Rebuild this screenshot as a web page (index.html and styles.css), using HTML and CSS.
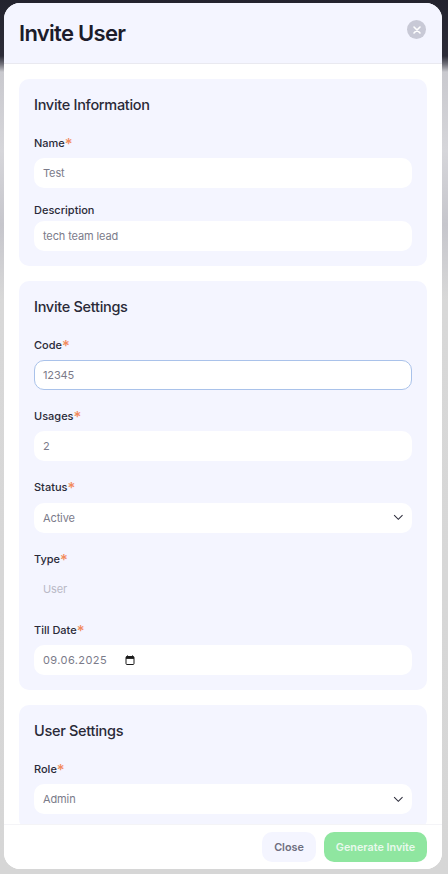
FILE: index.html
```html
<!DOCTYPE html>
<html lang="en">
<head>
<meta charset="utf-8">
<title>Invite User</title>
<link rel="stylesheet" href="styles.css">
</head>
<body>
<div class="modal">
  <header class="modal-head">
    <h1 class="modal-title">Invite User</h1>
    <button class="dismiss" type="button" aria-label="Close">
      <svg viewBox="0 0 10 10" width="10" height="10"><path d="M2 2l6 6M8 2l-6 6" stroke="#fff" stroke-width="1.6" stroke-linecap="round" fill="none"/></svg>
    </button>
  </header>
  <div class="modal-body">
    <section class="card">
      <h2 class="card-title">Invite Information</h2>
      <div class="field">
        <label class="label req">Name<span class="star">*</span></label>
        <div class="control">Test</div>
      </div>
      <div class="field">
        <label class="label">Description</label>
        <div class="control">tech team lead</div>
      </div>
    </section>
    <section class="card">
      <h2 class="card-title">Invite Settings</h2>
      <div class="field">
        <label class="label req">Code<span class="star">*</span></label>
        <div class="control focused">12345</div>
      </div>
      <div class="field">
        <label class="label req">Usages<span class="star">*</span></label>
        <div class="control">2</div>
      </div>
      <div class="field">
        <label class="label req">Status<span class="star">*</span></label>
        <div class="control select">Active
          <svg class="chevron" viewBox="0 0 12 8" width="11" height="7"><path d="M1 1.2l4.8 4.8 4.8-4.8" stroke="#2b2b3a" stroke-width="1.2" fill="none"/></svg>
        </div>
      </div>
      <div class="field">
        <label class="label req">Type<span class="star">*</span></label>
        <div class="control disabled">User</div>
      </div>
      <div class="field">
        <label class="label req">Till Date<span class="star">*</span></label>
        <div class="control date"><span class="date-text">09.06.2025</span>
          <svg viewBox="0 0 10 10" width="10" height="10"><path d="M2.5 .4v1.2M7.5 .4v1.2" stroke="#1a1a1a" stroke-width="1"/><rect x="1" y="1.5" width="8" height="8" rx="1" fill="none" stroke="#1a1a1a" stroke-width="1"/><rect x="1" y="1.5" width="8" height="2.4" fill="#1a1a1a"/></svg>
        </div>
      </div>
    </section>
    <section class="card">
      <h2 class="card-title">User Settings</h2>
      <div class="field">
        <label class="label req">Role<span class="star">*</span></label>
        <div class="control select">Admin
          <svg class="chevron" viewBox="0 0 12 8" width="11" height="7"><path d="M1 1.2l4.8 4.8 4.8-4.8" stroke="#2b2b3a" stroke-width="1.2" fill="none"/></svg>
        </div>
      </div>
    </section>
  </div>
  <footer class="modal-foot">
    <button class="btn btn-close" type="button">Close</button>
    <button class="btn btn-primary" type="button">Generate Invite</button>
  </footer>
</div>
</body>
</html>
```
FILE: styles.css
```css
* { box-sizing: border-box; }
html, body { height: 100%; }
body {
  margin: 0;
  padding: 3px 6px 5px 4px;
  overflow: hidden;
  font-family: Inter, "Liberation Sans", sans-serif;
  background: linear-gradient(180deg, #23232e 0, #2c2c38 56px, #6f6f78 64px, #c9c9ce 72px, #d6d6da 150px, #c6c6cc 225px, #d8d8d8 300px, #d6d6d6 100%);
}
.modal {
  height: 100%;
  display: flex;
  flex-direction: column;
  background: #fff;
  border-radius: 16px;
  overflow: hidden;
}
.modal-head {
  flex: none;
  height: 61px;
  padding: 0 15px;
  display: flex;
  justify-content: space-between;
  background: #f4f5ff;
  border-bottom: 1px solid #e9e9f0;
}
.modal-title {
  margin: 15px 0 0;
  font-size: 22px;
  line-height: 30px;
  font-weight: 600;
  letter-spacing: -.7px;
  color: #1c1c2a;
}
.dismiss {
  margin: 17px 1px 0 0;
  width: 19px;
  height: 19px;
  padding: 0;
  border: 0;
  border-radius: 50%;
  background: #c8c9d6;
  display: flex;
  align-items: center;
  justify-content: center;
}
.modal-body {
  flex: 1;
  min-height: 0;
  overflow: hidden;
  padding: 15px 15px 0;
  display: flex;
  flex-direction: column;
  gap: 15px;
}
.card {
  flex: none;
  padding: 15px;
  background: #f4f5ff;
  border-radius: 10px;
}
.card-title {
  margin: 0;
  font-size: 14.5px;
  line-height: 22.75px;
  font-weight: 500;
  letter-spacing: -.3px;
  color: #2a2a38;
}
.field { margin-top: 14px; }
.label {
  display: block;
  margin-bottom: 3px;
  font-size: 11px;
  line-height: 16px;
  font-weight: 500;
  color: #2a2a38;
}
.label.req { line-height: 25px; height: 24.25px; }
.star {
  font-size: 15px;
  font-weight: 500;
  line-height: 1;
  vertical-align: -2px;
  color: #f28a5c;
}
.control {
  height: 30px;
  padding: 0 9px;
  display: flex;
  align-items: center;
  background: #fff;
  border-radius: 10px;
  font-size: 11px;
  letter-spacing: -.12px;
  color: #7b7b8a;
}
.focused { border: 1px solid #a9c2ea; padding: 0 8px; }
.select { justify-content: space-between; }
.chevron { margin-right: -1px; }
.disabled { background: transparent; color: #b9b9c6; }
.date { gap: 18px; }
.date-text { letter-spacing: .4px; }
.modal-foot {
  flex: none;
  height: 45px;
  padding: 7px 15px 0;
  display: flex;
  justify-content: flex-end;
  gap: 8px;
  background: #fff;
  border-top: 1px solid #f4f4f7;
}
.btn {
  height: 30px;
  border: 0;
  border-radius: 10px;
  font-family: inherit;
  font-size: 10.8px;
  font-weight: 600;
}
.btn-close { width: 54px; padding: 0; background: #f4f5ff; color: #6e6e7e; }
.btn-primary { width: 103px; padding: 0; background: #8fe6a0; color: #e8f9ec; }
```
